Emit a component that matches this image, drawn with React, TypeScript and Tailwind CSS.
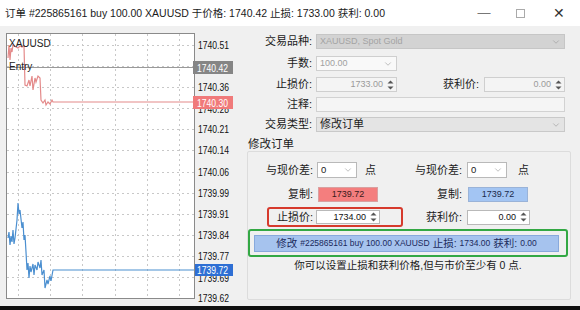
import { ChevronDown } from 'lucide-react';

const axis: [string, number][] = [
  ['1740.51', 45],
  ['1740.42', 66],
  ['1740.36', 87],
  ['1740.28', 109],
  ['1740.21', 129],
  ['1740.14', 150],
  ['1740.06', 172],
  ['1739.99', 193],
  ['1739.91', 214],
  ['1739.84', 235],
  ['1739.77', 256],
  ['1739.69', 278],
  ['1739.62', 298],
];

const hGrid = [45, 66, 87, 108, 129, 150, 172, 193, 214, 235, 256, 277];
const vGrid = [18, 50, 82, 115, 147, 179];

const redPath =
  'M8,58 L9,45 L10,60 L11,48 L12,52 L13,45 L16,47 L18,48 L20,46 L22,47 L24,46 L25,85 L27,86 L29,80 L30,86 L32,76 L33,90 L35,78 L36,82 L38,76 L40,78 L41,100 L43,103 L45,100 L46,105 L48,102 L50,104 L52,100 L53,102 L194,102';
const bluePath =
  'M8,238 L9,232 L10,245 L11,236 L12,242 L13,230 L14,244 L15,238 L17,220 L18,203 L19,214 L20,210 L22,228 L23,222 L24,240 L25,235 L26,252 L27,270 L28,263 L29,278 L30,266 L31,272 L33,264 L34,275 L35,265 L37,270 L38,262 L40,268 L41,260 L42,275 L44,270 L45,288 L47,280 L48,284 L50,276 L51,281 L53,270 L194,270';

const axisFont = 'Liberation Sans, Arial, sans-serif';

function Chart() {
  return (
    <svg width="240" height="280" viewBox="0 26 240 280" className="shrink-0">
      <rect x="6.5" y="33.5" width="188" height="265" fill="#fff" stroke="#8a8a8a" />
      {hGrid.map((y) => (
        <line key={y} x1="7" x2="194" y1={y + 0.5} y2={y + 0.5} stroke="#c8c8c8" strokeDasharray="2 3" />
      ))}
      {vGrid.map((x) => (
        <line key={x} x1={x + 0.5} x2={x + 0.5} y1="34" y2="298" stroke="#c8c8c8" strokeDasharray="2 3" />
      ))}
      <line x1="7" x2="194" y1="67.5" y2="67.5" stroke="#9a9a9a" />
      <path d={redPath} fill="none" stroke="#e48a8a" strokeWidth="1.2" />
      <path d={bluePath} fill="none" stroke="#4b8fd0" strokeWidth="1.2" />
      <text x="9" y="47" fontSize="10" fill="#222" fontFamily={axisFont}>XAUUSD</text>
      <text x="9" y="70" fontSize="10" fill="#222" fontFamily={axisFont}>Entry</text>
      {axis.map(([t, y]) => (
        <text
          key={t}
          x="198"
          y={y + 4}
          fontSize="10.5"
          fill="#111"
          fontFamily={axisFont}
          textLength="31"
          lengthAdjust="spacingAndGlyphs"
        >
          {t}
        </text>
      ))}
      <rect x="193" y="61" width="40" height="13" fill="#858585" />
      <text x="197" y="71.5" fontSize="10.5" fill="#fff" fontFamily={axisFont} textLength="31" lengthAdjust="spacingAndGlyphs">
        1740.42
      </text>
      <rect x="193" y="96" width="40" height="13" fill="#f07a7a" />
      <text x="197" y="106.5" fontSize="10.5" fill="#fff" fontFamily={axisFont} textLength="31" lengthAdjust="spacingAndGlyphs">
        1740.30
      </text>
      <rect x="195" y="264" width="38" height="12" fill="#2e6fd4" />
      <text x="197" y="274" fontSize="10.5" fill="#fff" fontFamily={axisFont} textLength="31" lengthAdjust="spacingAndGlyphs">
        1739.72
      </text>
    </svg>
  );
}

function Spin() {
  return (
    <svg width="9" height="12" viewBox="0 0 9 12" className="shrink-0">
      <path d="M4.5 1.5 L7.5 4.5 L1.5 4.5 Z" fill="#555" />
      <path d="M1.5 7.5 L7.5 7.5 L4.5 10.5 Z" fill="#555" />
    </svg>
  );
}

function Chevron() {
  return <ChevronDown size={10} strokeWidth={1.5} className="ml-auto shrink-0 text-[#9a9a9a]" />;
}

export default function App() {
  return (
    <div className="w-[580px] h-[310px] flex flex-col overflow-hidden bg-[#f0f0f0] font-['Liberation_Sans','Noto_Sans_CJK_SC',sans-serif] text-[#1a1a1a]">
      {/* title bar */}
      <div className="h-[26px] shrink-0 bg-white flex items-center pl-[5px]">
        <span className="text-[10.5px] leading-none whitespace-nowrap">
          订单 #225865161 buy 100.00 XAUUSD 于价格: 1740.42 止损: 1733.00 获利: 0.00
        </span>
        <div className="ml-auto flex items-center h-full">
          <span className="w-[36px] text-center text-[#777] text-[13px]">—</span>
          <span className="w-[36px] flex justify-center">
            <span className="w-[9px] h-[9px] border border-[#aaa]" />
          </span>
          <span className="w-[42px] text-center text-[#333] text-[14px]">✕</span>
        </div>
      </div>

      <div className="flex-1 flex">
        <Chart />

        {/* order form */}
        <div className="flex-1 flex flex-col text-[11px] leading-none">
          <div className="flex items-center h-[15px] mt-[8px]">
            <span className="w-[72px] text-right">交易品种:</span>
            <div className="ml-[4px] w-[249px] h-[15px] bg-[#d3d3d3] border border-[#c6c6c6] flex items-center px-[3px] text-[9px] text-[#a3a3a3]">
              XAUUSD, Spot Gold
              <Chevron />
            </div>
          </div>
          <div className="flex items-center h-[15px] mt-[7px]">
            <span className="w-[72px] text-right">手数:</span>
            <div className="ml-[4px] w-[81px] h-[15px] bg-[#f9f9f9] border border-[#cfcfcf] flex items-center px-[3px] text-[9px] text-[#a0a0a0]">
              100.00
              <Chevron />
            </div>
          </div>
          <div className="flex items-center h-[15px] mt-[6px]">
            <span className="w-[72px] text-right">止损价:</span>
            <div className="ml-[4px] w-[81px] h-[15px] bg-[#f4f4f4] border border-[#cfcfcf] flex items-center justify-end gap-[3px] pr-[1px] text-[9px] text-[#9a9a9a]">
              1733.00
              <Spin />
            </div>
            <span className="w-[82px] text-right">获利价:</span>
            <div className="ml-[5px] w-[81px] h-[15px] bg-[#f4f4f4] border border-[#cfcfcf] flex items-center justify-end gap-[3px] pr-[1px] text-[9px] text-[#9a9a9a]">
              0.00
              <Spin />
            </div>
          </div>
          <div className="flex items-center h-[15px] mt-[5px]">
            <span className="w-[72px] text-right">注释:</span>
            <div className="ml-[4px] w-[249px] h-[15px] bg-[#f5f5f5] border border-[#d2d2d2]" />
          </div>
          <div className="flex items-center h-[15px] mt-[5px]">
            <span className="w-[72px] text-right">交易类型:</span>
            <div className="ml-[4px] w-[249px] h-[15px] bg-[#e4e4e4] border border-[#c9c9c9] flex items-center px-[3px] text-[11px]">
              修改订单
              <Chevron />
            </div>
          </div>

          <div className="mt-[7px] ml-[8px] h-[12px] text-[11.5px]">修改订单</div>

          {/* group box */}
          <div className="ml-[7px] w-[324px] h-[149px] border border-[#dcdcdc] rounded-[2px] flex flex-col">
            <div className="flex items-center h-[16px] mt-[10px]">
              <div className="w-[150px] flex items-center">
                <span className="w-[65px] text-right">与现价差:</span>
                <div className="ml-[4px] w-[40px] h-[16px] bg-white border border-[#b9b9b9] flex items-center px-[3px] text-[9.5px]">
                  0
                  <Chevron />
                </div>
                <span className="ml-[8px]">点</span>
              </div>
              <span className="w-[64px] text-right">与现价差:</span>
              <div className="ml-[5px] w-[40px] h-[16px] bg-white border border-[#b9b9b9] flex items-center px-[3px] text-[9.5px]">
                0
                <Chevron />
              </div>
              <span className="ml-[11px]">点</span>
            </div>

            <div className="flex items-center h-[14px] mt-[9px]">
              <div className="w-[150px] flex items-center">
                <span className="w-[65px] text-right">复制:</span>
                <div className="ml-[5px] w-[60px] h-[15px] bg-[#f47e7e] border border-[#d9a0a0] flex items-center justify-center text-[9px] text-[#3a1a1a]">
                  1739.72
                </div>
              </div>
              <span className="w-[64px] text-right">复制:</span>
              <div className="ml-[6px] w-[60px] h-[15px] bg-[#a3c5f3] border border-[#9ab3d8] flex items-center justify-center text-[9px] text-[#1a2a4a]">
                1739.72
              </div>
            </div>

            <div className="flex items-center h-[20px] mt-[6px]">
              <div className="ml-[19px] w-[136px] h-[20px] border-2 border-[#d63a2c] rounded-[3px] flex items-center">
                <span className="w-[44px] text-right">止损价:</span>
                <div className="ml-[3px] w-[64px] h-[14px] bg-white border border-[#b9b9b9] flex items-center justify-end gap-[3px] pr-[1px] text-[9px] text-[#111]">
                  1734.00
                  <Spin />
                </div>
              </div>
              <span className="w-[59px] text-right">获利价:</span>
              <div className="ml-[5px] w-[63px] h-[15px] bg-white border border-[#b9b9b9] flex items-center justify-end gap-[3px] pr-[1px] text-[9px] text-[#111]">
                0.00
                <Spin />
              </div>
            </div>

            <div className="mt-[2px] w-[320px] h-[28px] border-2 border-[#33a844] rounded-[3px] flex items-center pl-[4px]">
              <div className="w-[305px] h-[17px] bg-[#a6c3ee] border border-[#88a9dc] flex items-center justify-center gap-[3px] text-[8.5px] text-[#1b2a5c] whitespace-nowrap">
                <span className="text-[10.5px]">修改</span>
                <span>#225865161 buy 100.00 XAUUSD</span>
                <span className="text-[10.5px]">止损:</span>
                <span>1734.00</span>
                <span className="text-[10.5px]">获利:</span>
                <span>0.00</span>
              </div>
            </div>

            <div className="mt-[3px] text-center text-[10.5px] pr-[2px]">
              你可以设置止损和获利价格,但与市价至少有 0 点.
            </div>
          </div>
        </div>
      </div>

      <div className="h-[4px] shrink-0 bg-[#111]" />
    </div>
  );
}
